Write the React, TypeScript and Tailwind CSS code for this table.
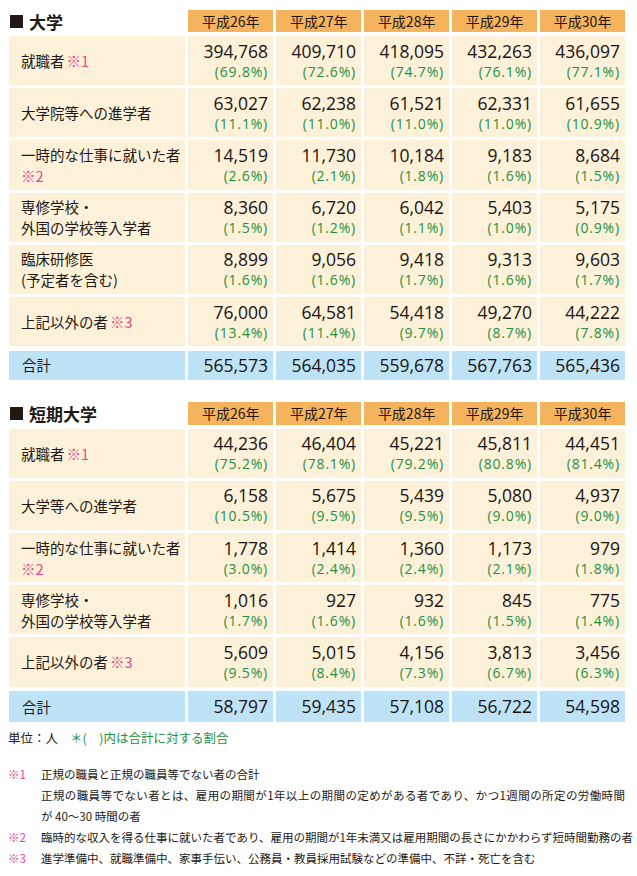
import React from "react";

type Row = { label: React.ReactNode; vals: [string, string][] };

const jp = { fontFamily: '"Noto Sans CJK JP", "Noto Sans", sans-serif' };
const num = { fontFamily: '"Open Sans", "Noto Sans", "Liberation Sans", sans-serif' };

const Mark = ({ n }: { n: string }) => (
  <span className="text-[#e5468c] ml-[2px]">※{n}</span>
);

const years = ["平成26年", "平成27年", "平成28年", "平成29年", "平成30年"];

const t1: Row[] = [
  {
    label: (
      <>
        就職者<Mark n="1" />
      </>
    ),
    vals: [
      ["394,768", "(69.8%)"],
      ["409,710", "(72.6%)"],
      ["418,095", "(74.7%)"],
      ["432,263", "(76.1%)"],
      ["436,097", "(77.1%)"],
    ],
  },
  {
    label: "大学院等への進学者",
    vals: [
      ["63,027", "(11.1%)"],
      ["62,238", "(11.0%)"],
      ["61,521", "(11.0%)"],
      ["62,331", "(11.0%)"],
      ["61,655", "(10.9%)"],
    ],
  },
  {
    label: (
      <>
        一時的な仕事に就いた者
        <br />
        <span className="text-[#e5468c]">※2</span>
      </>
    ),
    vals: [
      ["14,519", "(2.6%)"],
      ["11,730", "(2.1%)"],
      ["10,184", "(1.8%)"],
      ["9,183", "(1.6%)"],
      ["8,684", "(1.5%)"],
    ],
  },
  {
    label: (
      <>
        専修学校・
        <br />
        外国の学校等入学者
      </>
    ),
    vals: [
      ["8,360", "(1.5%)"],
      ["6,720", "(1.2%)"],
      ["6,042", "(1.1%)"],
      ["5,403", "(1.0%)"],
      ["5,175", "(0.9%)"],
    ],
  },
  {
    label: (
      <>
        臨床研修医
        <br />
        (予定者を含む)
      </>
    ),
    vals: [
      ["8,899", "(1.6%)"],
      ["9,056", "(1.6%)"],
      ["9,418", "(1.7%)"],
      ["9,313", "(1.6%)"],
      ["9,603", "(1.7%)"],
    ],
  },
  {
    label: (
      <>
        上記以外の者<Mark n="3" />
      </>
    ),
    vals: [
      ["76,000", "(13.4%)"],
      ["64,581", "(11.4%)"],
      ["54,418", "(9.7%)"],
      ["49,270", "(8.7%)"],
      ["44,222", "(7.8%)"],
    ],
  },
];

const t2: Row[] = [
  {
    label: (
      <>
        就職者<Mark n="1" />
      </>
    ),
    vals: [
      ["44,236", "(75.2%)"],
      ["46,404", "(78.1%)"],
      ["45,221", "(79.2%)"],
      ["45,811", "(80.8%)"],
      ["44,451", "(81.4%)"],
    ],
  },
  {
    label: "大学等への進学者",
    vals: [
      ["6,158", "(10.5%)"],
      ["5,675", "(9.5%)"],
      ["5,439", "(9.5%)"],
      ["5,080", "(9.0%)"],
      ["4,937", "(9.0%)"],
    ],
  },
  {
    label: (
      <>
        一時的な仕事に就いた者
        <br />
        <span className="text-[#e5468c]">※2</span>
      </>
    ),
    vals: [
      ["1,778", "(3.0%)"],
      ["1,414", "(2.4%)"],
      ["1,360", "(2.4%)"],
      ["1,173", "(2.1%)"],
      ["979", "(1.8%)"],
    ],
  },
  {
    label: (
      <>
        専修学校・
        <br />
        外国の学校等入学者
      </>
    ),
    vals: [
      ["1,016", "(1.7%)"],
      ["927", "(1.6%)"],
      ["932", "(1.6%)"],
      ["845", "(1.5%)"],
      ["775", "(1.4%)"],
    ],
  },
  {
    label: (
      <>
        上記以外の者<Mark n="3" />
      </>
    ),
    vals: [
      ["5,609", "(9.5%)"],
      ["5,015", "(8.4%)"],
      ["4,156", "(7.3%)"],
      ["3,813", "(6.7%)"],
      ["3,456", "(6.3%)"],
    ],
  },
];

const grid = "grid grid-cols-[176px_repeat(5,84.6px)] gap-x-[3.4px]";

function Table({
  title,
  rows,
  totals,
  headerH,
  totalH,
}: {
  title: string;
  rows: Row[];
  totals: string[];
  headerH: string;
  totalH: string;
}) {
  return (
    <div className="flex flex-col">
      <div className={`${grid} ${headerH}`}>
        <div className="flex items-center pl-[1px]">
          <span className="w-[13px] h-[13px] bg-[#231815] mr-[6px]" />
          <span className="text-[17px] font-bold text-[#231815] leading-none" style={jp}>
            {title}
          </span>
        </div>
        {years.map((y) => (
          <div
            key={y}
            className="bg-[#f5b35e] flex items-center justify-center text-[14px] text-[#231815]"
            style={jp}
          >
            {y}
          </div>
        ))}
      </div>
      <div className="flex flex-col gap-y-[3px] mt-[4px]">
        {rows.map((r, i) => (
          <div key={i} className={`${grid} h-[49.2px]`}>
            <div
              className="bg-[#fdf2d9] flex items-center pl-[12px] text-[14.5px] leading-[21px] text-[#231815]"
              style={jp}
            >
              <div>{r.label}</div>
            </div>
            {r.vals.map(([v, p], j) => (
              <div
                key={j}
                className="bg-[#fdf2d9] flex flex-col items-end justify-center pr-[5px]"
                style={num}
              >
                <span className="text-[17.5px] leading-[20px] text-[#1a1311] font-[370]">{v}</span>
                <span className="text-[14px] leading-[19px] tracking-[0.8px] text-[#239040] mt-[1px] font-[400]">
                  {p}
                </span>
              </div>
            ))}
          </div>
        ))}
      </div>
      <div className={`${grid} ${totalH} mt-[4.5px]`}>
        <div
          className="bg-[#bfe3f6] flex items-center pl-[13px] text-[14.5px] text-[#231815]"
          style={jp}
        >
          合計
        </div>
        {totals.map((t, j) => (
          <div
            key={j}
            className="bg-[#bfe3f6] flex items-center justify-end pr-[5px] text-[17.5px] text-[#1a1311] font-[370]"
            style={num}
          >
            {t}
          </div>
        ))}
      </div>
    </div>
  );
}

export default function App() {
  return (
    <div className="w-[637px] h-[876px] bg-white pt-[10px] pl-[9px] overflow-hidden text-[#231815]">
      <Table
        title="大学"
        rows={t1}
        totals={["565,573", "564,035", "559,678", "567,763", "565,436"]}
        headerH="h-[22px]"
        totalH="h-[29px]"
      />
      <div className="h-[22px]" />
      <Table
        title="短期大学"
        rows={t2}
        totals={["58,797", "59,435", "57,108", "56,722", "54,598"]}
        headerH="h-[23px]"
        totalH="h-[31px]"
      />
      <div className="mt-[8px] flex items-center text-[12.5px] leading-[16px] -ml-[1px]" style={jp}>
        <span>単位：人</span>
        <span className="ml-[12px] text-[#239040]">＊(　)内は合計に対する割合</span>
      </div>
      <div
        className="mt-[18px] -ml-[1px] grid grid-cols-[33px_584px] text-[11.5px] leading-[21px] whitespace-nowrap"
        style={jp}
      >
        <span className="text-[#e5468c]">※1</span>
        <span>正規の職員と正規の職員等でない者の合計</span>
        <span />
        <span className="text-justify [text-align-last:justify]">
          正規の職員等でない者とは、雇用の期間が1年以上の期間の定めがある者であり、かつ1週間の所定の労働時間
        </span>
        <span />
        <span>が 40～30 時間の者</span>
        <span className="text-[#e5468c]">※2</span>
        <span className="text-justify [text-align-last:justify]">
          臨時的な収入を得る仕事に就いた者であり、雇用の期間が1年未満又は雇用期間の長さにかかわらず短時間勤務の者
        </span>
        <span className="text-[#e5468c]">※3</span>
        <span>進学準備中、就職準備中、家事手伝い、公務員・教員採用試験などの準備中、不詳・死亡を含む</span>
      </div>
    </div>
  );
}
